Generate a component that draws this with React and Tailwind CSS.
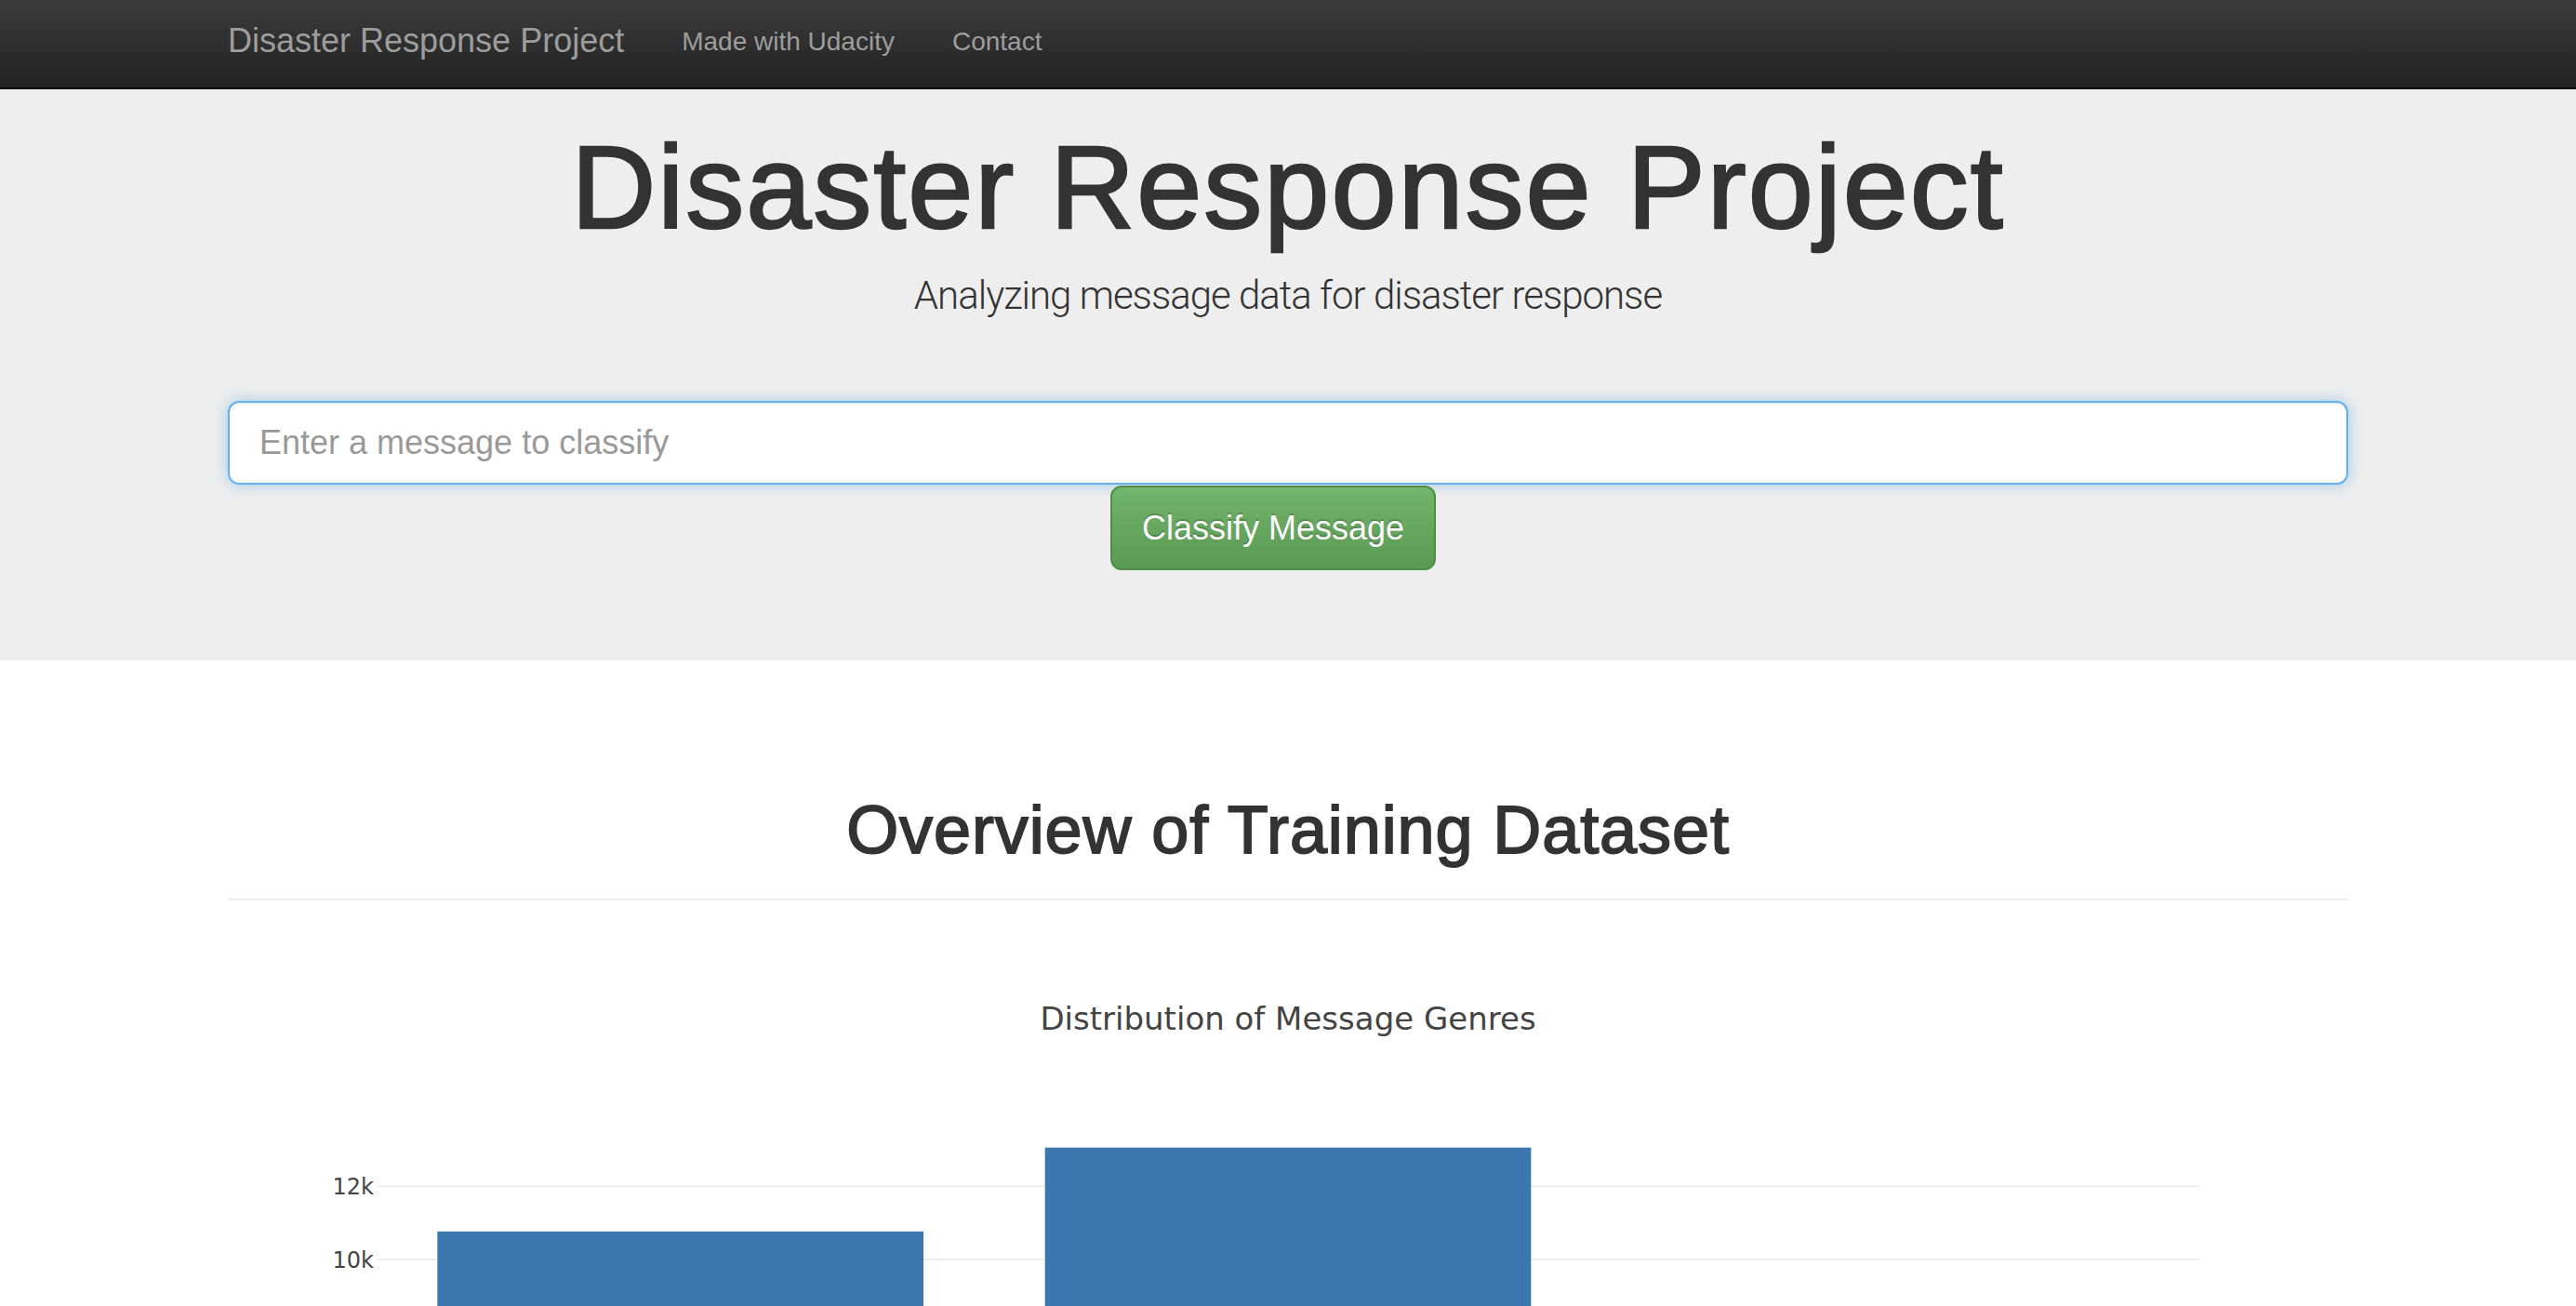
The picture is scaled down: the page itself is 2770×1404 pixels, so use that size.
import React from "react";

const genres = [
  { name: "direct", count: 10766 },
  { name: "news", count: 13054 },
  { name: "social", count: 2396 },
];

// plot area inside the chart svg (2x scale of plotly defaults)
const PLOT_L = 160;
const PLOT_T = 200;
const PLOT_W = 1960;
const PLOT_H = 540;
const Y_MAX = 13706.7;

function yPos(v) {
  return PLOT_T + PLOT_H - (v * PLOT_H) / Y_MAX;
}

function GenreChart() {
  const band = PLOT_W / genres.length;
  const barW = band * 0.8;
  const ticks = [0, 2000, 4000, 6000, 8000, 10000, 12000];

  return (
    <svg width="2280" height="900" className="block" fontFamily="'DejaVu Sans', Verdana, sans-serif">
      <text x="1140" y="99" textAnchor="middle" fontSize="34" fill="#444">
        Distribution of Message Genres
      </text>

      {/* grid */}
      {ticks.map((t) => (
        <g key={t}>
          <line
            x1={PLOT_L}
            x2={PLOT_L + PLOT_W}
            y1={yPos(t)}
            y2={yPos(t)}
            stroke={t === 0 ? "#444" : "#eee"}
            strokeWidth="2"
          />
          <text x={PLOT_L - 3} y={yPos(t) + 8.5} textAnchor="end" fontSize="24" fill="#444">
            {t === 0 ? "0" : `${t / 1000}k`}
          </text>
        </g>
      ))}

      {/* bars */}
      {genres.map((g, i) => {
        const x = PLOT_L + band * i + (band - barW) / 2;
        const top = yPos(g.count);
        return (
          <g key={g.name}>
            <rect x={x} y={top} width={barW} height={PLOT_T + PLOT_H - top} fill="#3b76af" />
            <text x={x + barW / 2} y={PLOT_T + PLOT_H + 38} textAnchor="middle" fontSize="24" fill="#444">
              {g.name}
            </text>
          </g>
        );
      })}

      <text x="1140" y="838" textAnchor="middle" fontSize="28" fill="#444">
        Genre
      </text>
      <text
        x="0"
        y="0"
        transform={`translate(62 ${PLOT_T + PLOT_H / 2}) rotate(-90)`}
        textAnchor="middle"
        fontSize="28"
        fill="#444"
      >
        Count
      </text>
    </svg>
  );
}

export default function App() {
  return (
    <div className="min-h-screen bg-white font-['Liberation_Sans',Arial,sans-serif] text-[#333]">
      {/* navbar */}
      <nav className="h-[96px] bg-gradient-to-b from-[#3c3c3c] to-[#222] border-b-2 border-black">
        <div className="w-[2280px] mx-auto flex items-start">
          <a className="mt-[24px] text-[36px] leading-[40px] text-[#9d9d9d]">Disaster Response Project</a>
          <a className="mt-[25px] ml-[62px] text-[28px] leading-[40px] text-[#9d9d9d]">Made with Udacity</a>
          <a className="mt-[25px] ml-[62px] text-[28px] leading-[40px] text-[#9d9d9d]">Contact</a>
        </div>
      </nav>

      {/* jumbotron */}
      <div className="bg-[#eee] pt-[37px] pb-[97px]">
        <div className="w-[2280px] mx-auto">
          <h1 className="text-center text-[126px] leading-[138px] tracking-[2px] text-[#333] [-webkit-text-stroke:2.4px_#333]">
            Disaster Response Project
          </h1>
          <p className="mt-[17px] text-center text-[42px] leading-[60px] font-light tracking-[-1px] font-['Roboto',sans-serif] text-[#333]">
            Analyzing message data for disaster response
          </p>

          <form className="mt-[83px]" onSubmit={(e) => e.preventDefault()}>
            <input
              type="text"
              placeholder="Enter a message to classify"
              className="block w-full h-[90px] px-[32px] text-[36px] text-[#555] bg-white border-2 border-[#66afe9] rounded-[12px] outline-none placeholder:text-[#999] shadow-[inset_0_2px_2px_rgba(0,0,0,0.075),0_0_16px_rgba(102,175,233,0.6)]"
            />
            <div className="flex justify-center mt-[1px]">
              <button
                type="submit"
                className="mr-[32px] w-[350px] h-[91px] rounded-[12px] border-2 border-[#4f8d4a] bg-gradient-to-b from-[#72b56c] to-[#5a9953] text-white text-[36px] [text-shadow:0_-2px_0_rgba(0,0,0,0.2)]"
              >
                Classify Message
              </button>
            </div>
          </form>
        </div>
      </div>

      {/* overview */}
      <div className="w-[2280px] mx-auto">
        <h1 className="mt-[142px] text-center text-[72px] leading-[80px] tracking-[0.9px] text-[#333] [-webkit-text-stroke:1.8px_#333]">
          Overview of Training Dataset
        </h1>
        <hr className="mt-[34px] border-t-2 border-[#eee]" />
        <div className="mt-[40px]">
          <GenreChart />
        </div>
      </div>
    </div>
  );
}
